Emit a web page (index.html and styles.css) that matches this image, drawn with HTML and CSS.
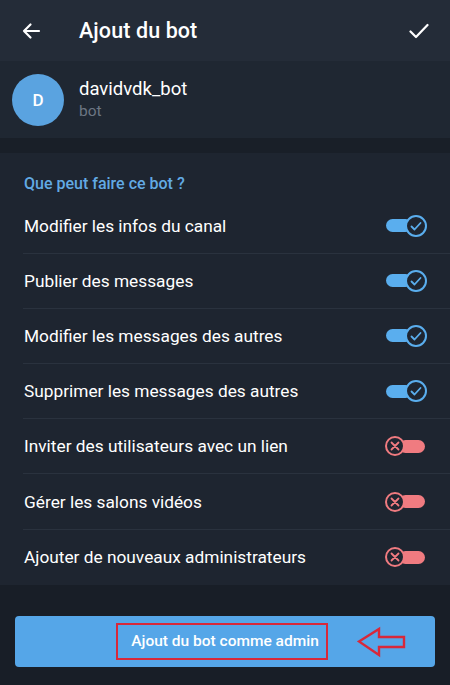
FILE: index.html
```html
<!DOCTYPE html>
<html lang="fr">
<head>
    <meta charset="UTF-8">
    <title>Ajout du bot</title>
    <link rel="stylesheet" href="styles.css">
</head>
<body>

<div id="screen">
    <div class="topbar">
        <svg class="icon-back" width="20" height="18" viewBox="0 0 20 18">
            <path d="M18 9H3M9.5 2.5L3 9l6.5 6.5" fill="none" stroke="#fff" stroke-width="2.2" stroke-linecap="round" stroke-linejoin="round"/>
        </svg>
        <h1 class="title">Ajout du bot</h1>
        <svg class="icon-done" width="20" height="16" viewBox="0 0 20 16">
            <path d="M1.5 8.5l5.5 5.5L18.5 2" fill="none" stroke="#fff" stroke-width="2.2" stroke-linecap="round" stroke-linejoin="round"/>
        </svg>
    </div>

    <div class="profile">
        <div class="avatar">D</div>
        <div class="profile-info">
            <div class="profile-name">davidvdk_bot</div>
            <div class="profile-sub">bot</div>
        </div>
    </div>

    <div class="gap"></div>

    <div class="rights">
        <div class="rights-head">Que peut faire ce bot ?</div>

        <div class="row">
            <span class="row-label">Modifier les infos du canal</span>
            <span class="toggle on"><span class="track"></span><span class="knob"><svg width="14" height="14" viewBox="0 0 14 14"><path d="M2.5 7.5l3 3 6-6.5" fill="none" stroke="#5aaeee" stroke-width="1.8" stroke-linecap="round" stroke-linejoin="round"/></svg></span></span>
        </div>
        <div class="row">
            <span class="row-label">Publier des messages</span>
            <span class="toggle on"><span class="track"></span><span class="knob"><svg width="14" height="14" viewBox="0 0 14 14"><path d="M2.5 7.5l3 3 6-6.5" fill="none" stroke="#5aaeee" stroke-width="1.8" stroke-linecap="round" stroke-linejoin="round"/></svg></span></span>
        </div>
        <div class="row">
            <span class="row-label">Modifier les messages des autres</span>
            <span class="toggle on"><span class="track"></span><span class="knob"><svg width="14" height="14" viewBox="0 0 14 14"><path d="M2.5 7.5l3 3 6-6.5" fill="none" stroke="#5aaeee" stroke-width="1.8" stroke-linecap="round" stroke-linejoin="round"/></svg></span></span>
        </div>
        <div class="row">
            <span class="row-label">Supprimer les messages des autres</span>
            <span class="toggle on"><span class="track"></span><span class="knob"><svg width="14" height="14" viewBox="0 0 14 14"><path d="M2.5 7.5l3 3 6-6.5" fill="none" stroke="#5aaeee" stroke-width="1.8" stroke-linecap="round" stroke-linejoin="round"/></svg></span></span>
        </div>
        <div class="row">
            <span class="row-label">Inviter des utilisateurs avec un lien</span>
            <span class="toggle off"><span class="knob"><svg width="12" height="12" viewBox="0 0 12 12"><path d="M2.5 2.5l7 7M9.5 2.5l-7 7" fill="none" stroke="#f07b80" stroke-width="1.8" stroke-linecap="round"/></svg></span><span class="track"></span></span>
        </div>
        <div class="row">
            <span class="row-label">Gérer les salons vidéos</span>
            <span class="toggle off"><span class="knob"><svg width="12" height="12" viewBox="0 0 12 12"><path d="M2.5 2.5l7 7M9.5 2.5l-7 7" fill="none" stroke="#f07b80" stroke-width="1.8" stroke-linecap="round"/></svg></span><span class="track"></span></span>
        </div>
        <div class="row">
            <span class="row-label">Ajouter de nouveaux administrateurs</span>
            <span class="toggle off"><span class="knob"><svg width="12" height="12" viewBox="0 0 12 12"><path d="M2.5 2.5l7 7M9.5 2.5l-7 7" fill="none" stroke="#f07b80" stroke-width="1.8" stroke-linecap="round"/></svg></span><span class="track"></span></span>
        </div>
    </div>

    <div class="footer">
        <div class="btn-main">
            Ajout du bot comme admin
            <span class="mark-box"></span>
            <svg class="mark-arrow" width="50" height="32" viewBox="0 0 50 32">
                <path d="M2 15.5L22 3v8h25v10H22v8z" fill="none" stroke="#d8283a" stroke-width="2.4" stroke-linejoin="miter"/>
            </svg>
        </div>
    </div>
</div>

</body>
</html>
```

FILE: styles.css
```css
body, html {
    margin:0;
    padding:0;
    background:#181e27;
    font-family:Roboto, "Noto Sans", sans-serif;
    color:#fff;
}
#screen {
    width:450px;
    height:685px;
    overflow:hidden;
}
.topbar {
    display:flex;
    align-items:center;
    height:61px;
    padding:0 21px 0 21px;
    background:#242c38;
    box-sizing:border-box;
}
.icon-back {
    flex:none;
}
.title {
    flex:1;
    margin:0 0 0 38px;
    font-size:21.5px;
    font-weight:500;
    letter-spacing:0.1px;
}
.icon-done {
    flex:none;
}
.profile {
    display:flex;
    align-items:center;
    height:77px;
    padding:0 12px;
    background:#1f2732;
}
.avatar {
    width:52px;
    height:52px;
    border-radius:50%;
    background:#5aa3e0;
    color:#fff;
    font-size:17px;
    font-weight:500;
    display:flex;
    align-items:center;
    justify-content:center;
    flex:none;
}
.profile-info {
    margin-left:15px;
}
.profile-name {
    font-size:18.5px;
    line-height:21px;
}
.profile-sub {
    margin-top:2px;
    font-size:15.5px;
    line-height:19px;
    color:#6c7683;
}
.gap {
    height:15px;
    background:#191f28;
}
.rights {
    background:#1e2530;
}
.rights-head {
    padding:22px 24px 5.5px;
    font-size:16px;
    line-height:18px;
    font-weight:500;
    color:#62aae4;
}
.row {
    display:flex;
    align-items:center;
    justify-content:space-between;
    height:55.2px;
    margin-left:23px;
    padding-right:23px;
    box-sizing:border-box;
    border-bottom:1px solid #2a323e;
}
.row:last-child {
    border-bottom:none;
}
.row-label {
    font-size:17.3px;
    color:#fff;
    padding-left:1px;
}
.toggle {
    display:flex;
    align-items:center;
    flex:none;
}
.track {
    display:block;
    height:13px;
    width:26px;
    border-radius:7px;
}
.knob {
    display:flex;
    align-items:center;
    justify-content:center;
    border-radius:50%;
    background:#1e2530;
    box-sizing:border-box;
}
.toggle.on .track {
    background:#5aaeee;
}
.toggle.on .knob {
    width:22px;
    height:22px;
    border:2px solid #5aaeee;
    margin-left:-7px;
}
.toggle.off {
    margin-right:2px;
}
.toggle.off .track {
    background:#f07b80;
    margin-left:-6px;
}
.toggle.off .knob {
    width:20px;
    height:20px;
    border:2px solid #f07b80;
    position:relative;
    z-index:1;
}
.footer {
    height:100px;
    padding:31px 15px 0;
    box-sizing:border-box;
    background:#181e27;
}
.btn-main {
    position:relative;
    height:51px;
    border-radius:4px;
    background:#55a6e8;
    color:#fff;
    font-size:15.5px;
    font-weight:500;
    display:flex;
    align-items:center;
    justify-content:center;
}
.mark-box {
    position:absolute;
    left:101px;
    top:7px;
    width:212px;
    height:37px;
    border:2px solid #d8283a;
    box-sizing:border-box;
}
.mark-arrow {
    position:absolute;
    left:342px;
    top:10px;
}
```
